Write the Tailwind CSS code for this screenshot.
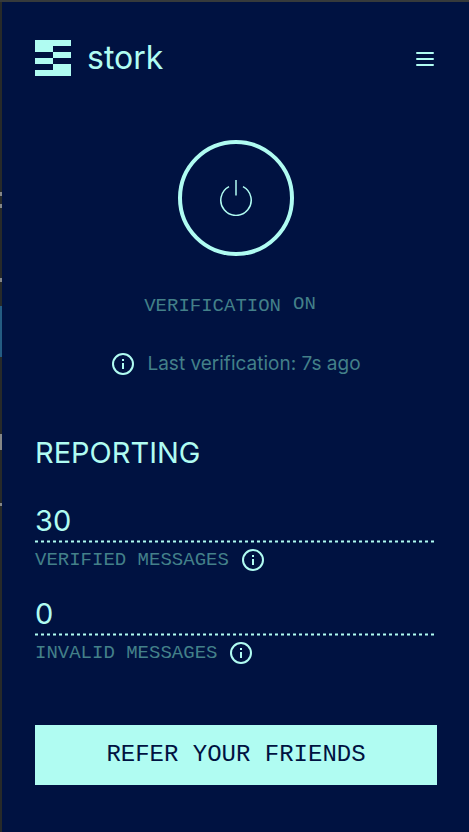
<!DOCTYPE html>
<html lang="en">
<head>
  <meta charset="UTF-8">
  <meta name="viewport" content="width=device-width, initial-scale=1">
  <title>Stork</title>
  <script src="https://cdn.jsdelivr.net/npm/@tailwindcss/browser@4"></script>
</head>
<body class="min-h-screen flex bg-[#001241] border-t-2 border-[#363a3b] font-['Inter','Liberation_Sans',sans-serif] text-[#b0fcf2]">
  <!-- edge of the page behind the popup -->
  <div class="w-[2px] shrink-0 bg-[#272a29]" aria-hidden="true">
    <div class="h-[190px]"></div>
    <div class="h-4 border-y-4 border-[#858786]"></div>
    <div class="h-[70px]"></div>
    <div class="h-1 bg-[#858786]"></div>
    <div class="h-6"></div>
    <div class="h-[51px] bg-[#245c82]"></div>
    <div class="h-[77px]"></div>
    <div class="h-4 bg-[#858786]"></div>
    <div class="h-[53px]"></div>
    <div class="h-[3px] bg-[#858786]"></div>
  </div>

  <main class="flex-1 pl-[33px] pr-8 pt-[38px] pb-10">
    <header class="flex items-center justify-between">
      <a href="#" class="flex items-center gap-4">
        <svg class="w-9 h-9" viewBox="0 0 36 36" fill="currentColor" shape-rendering="crispEdges" aria-hidden="true">
          <path d="M0 0h36v6H18v6H0zM18 12h18v6H18zM0 18h18v6H0zM18 24h18v12H0v-6h18z"/>
        </svg>
        <span class="text-[32px] leading-9">stork</span>
      </a>
      <button type="button" aria-label="Menu" class="pt-0.5 pr-[3px]">
        <svg class="w-[18px] h-[14px]" viewBox="0 0 18 14" fill="none" stroke="currentColor" stroke-width="2" stroke-linecap="round">
          <path d="M1 1h16M1 7h16M1 13h16"/>
        </svg>
      </button>
    </header>

    <section class="mt-16 flex flex-col items-center">
      <button type="button" aria-label="Toggle verification" class="w-[116px] h-[116px] flex items-center justify-center rounded-full border-4 border-[#b0fcf2]">
        <svg class="w-9 h-9" viewBox="0 0 36 36" fill="none" stroke="currentColor" stroke-width="1.5">
          <path d="M18 0v15.500M11 6.700a15.200 15.200 0 1 0 14 0"/>
        </svg>
      </button>
      <p class="mt-9 mr-3 flex items-center gap-3 font-['Liberation_Mono',monospace] text-[19px] leading-6 text-[#438089]">
        <span>VERIFICATION</span>
        <span class="pb-1">ON</span>
      </p>
      <p class="mt-8 flex items-center gap-3 text-[19px] leading-6 text-[#438089]">
        <svg class="w-6 h-6 text-[#b0fcf2]" viewBox="0 0 24 24" fill="none" stroke="currentColor" stroke-width="2" aria-hidden="true">
          <circle cx="12" cy="12" r="10"/>
          <path d="M12 11v6M12 7v2"/>
        </svg>
        Last verification: 7s ago
      </p>
    </section>

    <section class="mt-[59px]">
      <h1 class="text-[29px] leading-9">REPORTING</h1>

      <dl class="mt-8 flex flex-col gap-[22px]">
        <div class="flex flex-col-reverse">
          <dt class="flex items-center gap-3 mt-[3px] font-['Liberation_Mono',monospace] text-[19px] leading-7 text-[#438089]">
            VERIFIED MESSAGES
            <button type="button" aria-label="About verified messages" class="text-[#b0fcf2]">
              <svg class="w-6 h-6" viewBox="0 0 24 24" fill="none" stroke="currentColor" stroke-width="2">
                <circle cx="12" cy="12" r="10"/>
                <path d="M12 11v6M12 7v2"/>
              </svg>
            </button>
          </dt>
          <dd class="text-[29px] leading-9">
            30
            <svg class="block w-full h-[3px] mt-px" aria-hidden="true">
              <line x1="0" y1="1.5" x2="100%" y2="1.5" stroke="currentColor" stroke-width="2" stroke-dasharray="3"/>
            </svg>
          </dd>
        </div>

        <div class="flex flex-col-reverse">
          <dt class="flex items-center gap-3 mt-[3px] font-['Liberation_Mono',monospace] text-[19px] leading-7 text-[#438089]">
            INVALID MESSAGES
            <button type="button" aria-label="About invalid messages" class="text-[#b0fcf2]">
              <svg class="w-6 h-6" viewBox="0 0 24 24" fill="none" stroke="currentColor" stroke-width="2">
                <circle cx="12" cy="12" r="10"/>
                <path d="M12 11v6M12 7v2"/>
              </svg>
            </button>
          </dt>
          <dd class="text-[29px] leading-9">
            0
            <svg class="block w-full h-[3px] mt-px" aria-hidden="true">
              <line x1="0" y1="1.5" x2="100%" y2="1.5" stroke="currentColor" stroke-width="2" stroke-dasharray="3"/>
            </svg>
          </dd>
        </div>
      </dl>
    </section>

    <button type="button" class="mt-[58px] w-full h-[60px] bg-[#b0fcf2] font-['Liberation_Mono',monospace] text-2xl text-[#001241]">REFER YOUR FRIENDS</button>
  </main>
</body>
</html>
